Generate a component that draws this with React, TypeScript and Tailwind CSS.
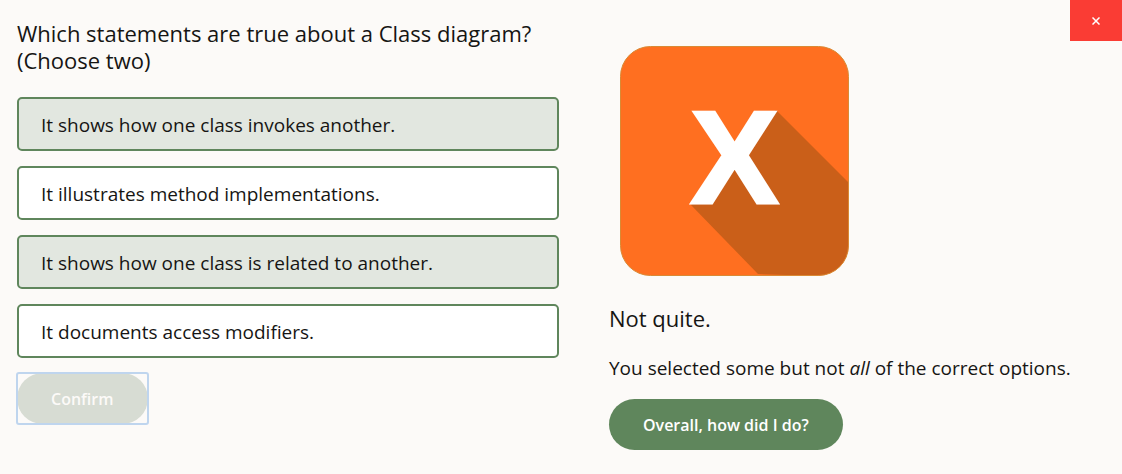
import { useState } from "react";

const options = [
  "It shows how one class invokes another.",
  "It illustrates method implementations.",
  "It shows how one class is related to another.",
  "It documents access modifiers.",
];

function ResultIcon() {
  return (
    <svg viewBox="0 0 229 230" className="ml-[11px] block h-[230px] w-[229px]" role="img" aria-label="Incorrect">
      <defs>
        <clipPath id="tile">
          <rect x="0.5" y="0.5" width="228" height="229" rx="30" />
        </clipPath>
      </defs>
      <rect x="0.5" y="0.5" width="228" height="229" rx="30" fill="#ff6f20" />
      <path d="M156 64 L229 137 V230 H200 L138 228 L71 159 Z" fill="#ca5f19" clipPath="url(#tile)" />
      <rect x="0.5" y="0.5" width="228" height="229" rx="30" fill="none" stroke="#d98a35" />
      <text
        x="114.5"
        y="157"
        textAnchor="middle"
        fontSize="132"
        fontWeight="700"
        fill="#ffffff"
        stroke="#ffffff"
        strokeWidth="3"
        fontFamily="Liberation Sans, sans-serif"
      >
        X
      </text>
    </svg>
  );
}

export default function App() {
  const [selected, setSelected] = useState([0, 2]);
  const toggle = (i: number) =>
    setSelected((s) => (s.includes(i) ? s.filter((n) => n !== i) : [...s, i]));

  return (
    <main className="relative min-h-screen bg-[#fcfaf8] font-['Open_Sans',sans-serif] text-[#161513]">
      <button type="button" aria-label="Close" className="absolute top-0 right-0 flex h-[41px] w-[52px] items-center justify-center bg-[#fa3c34]">
        <svg viewBox="0 0 8 8" className="size-2" stroke="#ffffff" strokeWidth="1.5">
          <path d="M0.5 0.5 L7.5 7.5 M7.5 0.5 L0.5 7.5" />
        </svg>
      </button>
      <div className="grid grid-cols-[542fr_496fr] gap-[50px] px-[17px]">
        <form className="pt-5" onSubmit={(e) => e.preventDefault()}>
          <fieldset>
            <legend className="mb-[23px] text-[22px] leading-[27px]">
              Which statements are true about a Class diagram?
              <br />
              (Choose two)
            </legend>
            <div className="flex flex-col gap-[15px]">
              {options.map((text, i) => (
                <label
                  key={text}
                  className="flex h-[54px] cursor-pointer items-center rounded-[5px] border-2 border-[#5f865c] bg-white px-[22px] pt-0.5 text-[19px] has-checked:bg-[#e2e7e0]"
                >
                  <input type="checkbox" className="sr-only" checked={selected.includes(i)} onChange={() => toggle(i)} />
                  {text}
                </label>
              ))}
            </div>
          </fieldset>
          <div className="mt-[15px] inline-flex rounded-[2px] outline-2 -outline-offset-1 outline-[#bfd5ee]">
            <button type="submit" disabled className="h-[51px] rounded-full bg-[#d7dcd3] px-[34px] text-[16px] font-semibold text-[#fcfaf8]">
              Confirm
            </button>
          </div>
        </form>
        <section className="flex flex-col items-start pt-[46px]">
          <ResultIcon />
          <h2 className="mt-[29px] text-[22px] leading-[27px]">Not quite.</h2>
          <p className="mt-[23px] text-[19px] leading-[27px] whitespace-nowrap">
            You selected some but not <em>all</em> of the correct options.
          </p>
          <button type="button" className="mt-[17px] h-[51px] rounded-full bg-[#5f865c] px-[34px] text-[16px] font-semibold text-white">
            Overall, how did I do?
          </button>
        </section>
      </div>
    </main>
  );
}
